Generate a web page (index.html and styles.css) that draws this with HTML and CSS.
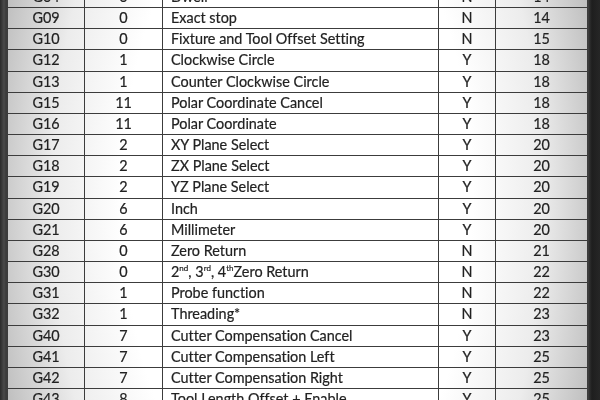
FILE: index.html
```html
<!DOCTYPE html>
<html>
<head>
<meta charset="utf-8">
<link rel="stylesheet" href="styles.css">
</head>
<body>
<div class="sheet">
  <div class="table">
    <div class="row"><div class="c code">G04</div><div class="c grp">0</div><div class="c desc">Dwell</div><div class="c modal">N</div><div class="c page">14</div></div>
    <div class="row"><div class="c code">G09</div><div class="c grp">0</div><div class="c desc">Exact stop</div><div class="c modal">N</div><div class="c page">14</div></div>
    <div class="row"><div class="c code">G10</div><div class="c grp">0</div><div class="c desc">Fixture and Tool Offset Setting</div><div class="c modal">N</div><div class="c page">15</div></div>
    <div class="row"><div class="c code">G12</div><div class="c grp">1</div><div class="c desc">Clockwise Circle</div><div class="c modal">Y</div><div class="c page">18</div></div>
    <div class="row"><div class="c code">G13</div><div class="c grp">1</div><div class="c desc">Counter Clockwise Circle</div><div class="c modal">Y</div><div class="c page">18</div></div>
    <div class="row"><div class="c code">G15</div><div class="c grp">11</div><div class="c desc">Polar Coordinate Cancel</div><div class="c modal">Y</div><div class="c page">18</div></div>
    <div class="row"><div class="c code">G16</div><div class="c grp">11</div><div class="c desc">Polar Coordinate</div><div class="c modal">Y</div><div class="c page">18</div></div>
    <div class="row"><div class="c code">G17</div><div class="c grp">2</div><div class="c desc">XY Plane Select</div><div class="c modal">Y</div><div class="c page">20</div></div>
    <div class="row"><div class="c code">G18</div><div class="c grp">2</div><div class="c desc">ZX Plane Select</div><div class="c modal">Y</div><div class="c page">20</div></div>
    <div class="row"><div class="c code">G19</div><div class="c grp">2</div><div class="c desc">YZ Plane Select</div><div class="c modal">Y</div><div class="c page">20</div></div>
    <div class="row"><div class="c code">G20</div><div class="c grp">6</div><div class="c desc">Inch</div><div class="c modal">Y</div><div class="c page">20</div></div>
    <div class="row"><div class="c code">G21</div><div class="c grp">6</div><div class="c desc">Millimeter</div><div class="c modal">Y</div><div class="c page">20</div></div>
    <div class="row"><div class="c code">G28</div><div class="c grp">0</div><div class="c desc">Zero Return</div><div class="c modal">N</div><div class="c page">21</div></div>
    <div class="row"><div class="c code">G30</div><div class="c grp">0</div><div class="c desc">2<sup>nd</sup>, 3<sup>rd</sup>, 4<sup>th</sup>Zero Return</div><div class="c modal">N</div><div class="c page">22</div></div>
    <div class="row"><div class="c code">G31</div><div class="c grp">1</div><div class="c desc">Probe function</div><div class="c modal">N</div><div class="c page">22</div></div>
    <div class="row"><div class="c code">G32</div><div class="c grp">1</div><div class="c desc">Threading*</div><div class="c modal">N</div><div class="c page">23</div></div>
    <div class="row"><div class="c code">G40</div><div class="c grp">7</div><div class="c desc">Cutter Compensation Cancel</div><div class="c modal">Y</div><div class="c page">23</div></div>
    <div class="row"><div class="c code">G41</div><div class="c grp">7</div><div class="c desc">Cutter Compensation Left</div><div class="c modal">Y</div><div class="c page">25</div></div>
    <div class="row"><div class="c code">G42</div><div class="c grp">7</div><div class="c desc">Cutter Compensation Right</div><div class="c modal">Y</div><div class="c page">25</div></div>
    <div class="row"><div class="c code">G43</div><div class="c grp">8</div><div class="c desc">Tool Length Offset + Enable</div><div class="c modal">Y</div><div class="c page">25</div></div>
  </div>
</div>
</body>
</html>
```
FILE: styles.css
```css
html, body {
  margin: 0;
  padding: 0;
  width: 600px;
  height: 400px;
  overflow: hidden;
}
body {
  background: linear-gradient(90deg, #2a2a2a 0px, #4a4a4a 4px, #3a3a3a 6px, #3a3a3a 588px, #1e1e1e 592px, #262626 600px);
  font-family: Lato, "Open Sans", sans-serif;
  color: #222222;
}
.sheet {
  margin-left: 6px;
  width: 583px;
  height: 400px;
  overflow: hidden;
  background:
    radial-gradient(ellipse 60% 170% at 50% 50%, #ffffff 50%, #ececec 70%, #c4c4c4 86%, #9e9e9e 100%);
}
.table {
  margin-top: -13px;
  border-left: 2px solid #3c3c3c;
  border-right: 2px solid #3c3c3c;
  filter: blur(0.35px);
}
.row {
  display: grid;
  grid-template-columns: 76px 78px 276px 57px 1fr;
  height: 21.17px;
  box-sizing: border-box;
  border-bottom: 1.5px solid #3c3c3c;
}
.c {
  font-size: 14.4px;
  line-height: 20px;
  white-space: nowrap;
  text-align: center;
  font-variant-ligatures: none;
  -webkit-text-stroke: 0.2px #222222;
}
.c + .c {
  border-left: 1.5px solid #3c3c3c;
}
.desc {
  text-align: left;
  padding-left: 8px;
}
sup {
  font-size: 8px;
  line-height: 0;
  vertical-align: 6px;
}
```
